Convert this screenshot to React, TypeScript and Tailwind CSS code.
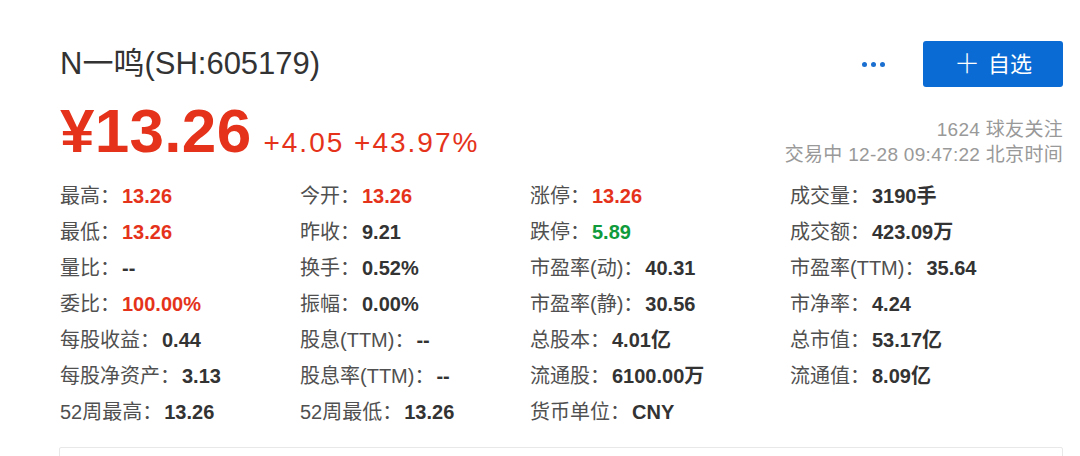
import React from "react";

const FONT = '"Liberation Sans", "Noto Sans CJK SC", sans-serif';

type Cell = { label: string; value: string; color?: string } | null;

const RED = "text-[#e5331b]";
const GREEN = "text-[#0f9a3c]";

const rows: Cell[][] = [
  [
    { label: "最高", value: "13.26", color: RED },
    { label: "今开", value: "13.26", color: RED },
    { label: "涨停", value: "13.26", color: RED },
    { label: "成交量", value: "3190手" },
  ],
  [
    { label: "最低", value: "13.26", color: RED },
    { label: "昨收", value: "9.21" },
    { label: "跌停", value: "5.89", color: GREEN },
    { label: "成交额", value: "423.09万" },
  ],
  [
    { label: "量比", value: "--" },
    { label: "换手", value: "0.52%" },
    { label: "市盈率(动)", value: "40.31" },
    { label: "市盈率(TTM)", value: "35.64" },
  ],
  [
    { label: "委比", value: "100.00%", color: RED },
    { label: "振幅", value: "0.00%" },
    { label: "市盈率(静)", value: "30.56" },
    { label: "市净率", value: "4.24" },
  ],
  [
    { label: "每股收益", value: "0.44" },
    { label: "股息(TTM)", value: "--" },
    { label: "总股本", value: "4.01亿" },
    { label: "总市值", value: "53.17亿" },
  ],
  [
    { label: "每股净资产", value: "3.13" },
    { label: "股息率(TTM)", value: "--" },
    { label: "流通股", value: "6100.00万" },
    { label: "流通值", value: "8.09亿" },
  ],
  [
    { label: "52周最高", value: "13.26" },
    { label: "52周最低", value: "13.26" },
    { label: "货币单位", value: "CNY" },
    null,
  ],
];

export default function App() {
  return (
    <div
      className="w-[1080px] h-[456px] overflow-hidden bg-white pl-[60px] pr-[17px] pt-[41px]"
      style={{ fontFamily: FONT }}
    >
      {/* header */}
      <div className="flex items-center justify-between h-[46px]">
        <h1 className="text-[31px] leading-[46px] text-[#333333] font-normal">
          N一鸣(SH:605179)
        </h1>
        <div className="flex items-center">
          <span className="flex items-center gap-[4px] mr-[38px]">
            <span className="block w-[5px] h-[5px] rounded-full bg-[#1a6fd0]" />
            <span className="block w-[5px] h-[5px] rounded-full bg-[#1a6fd0]" />
            <span className="block w-[5px] h-[5px] rounded-full bg-[#1a6fd0]" />
          </span>
          <button className="w-[140px] h-[46px] rounded-[3px] bg-[#0b6bd4] text-white text-[22px] flex items-center justify-center gap-[8px]">
            <span className="text-[26px] leading-none font-light">＋</span>
            <span>自选</span>
          </button>
        </div>
      </div>

      {/* price row */}
      <div className="flex justify-between h-[62px] mt-[13px]">
        <div className="flex items-baseline">
          <span className="text-[62px] leading-[62px] font-bold text-[#e5331b] tracking-[0.3px]">
            ¥13.26
          </span>
          <span className="ml-[12px] text-[28px] text-[#e5331b] tracking-[2px]">
            +4.05 +43.97%
          </span>
        </div>
        <div className="flex flex-col items-end self-start mt-[17px] text-[19px] leading-[25px] text-[#999999] tracking-[0.3px]">
          <span>1624 球友关注</span>
          <span>交易中 12-28 09:47:22 北京时间</span>
        </div>
      </div>

      {/* stats grid */}
      <div className="mt-[16px] grid grid-cols-[240px_230px_260px_1fr] text-[20px] leading-[36px]">
        {rows.map((row, ri) =>
          row.map((cell, ci) => (
            <div key={`${ri}-${ci}`} className="whitespace-nowrap text-[#505050]">
              {cell ? (
                <>
                  <span>{cell.label}：</span>
                  <span
                    className={`ml-[2px] font-bold ${cell.color ?? "text-[#333333]"}`}
                  >
                    {cell.value}
                  </span>
                </>
              ) : null}
            </div>
          ))
        )}
      </div>

      {/* bottom box */}
      <div className="mt-[17px] -ml-px h-[40px] border border-[#e8e8e8] rounded-[2px]" />
    </div>
  );
}
